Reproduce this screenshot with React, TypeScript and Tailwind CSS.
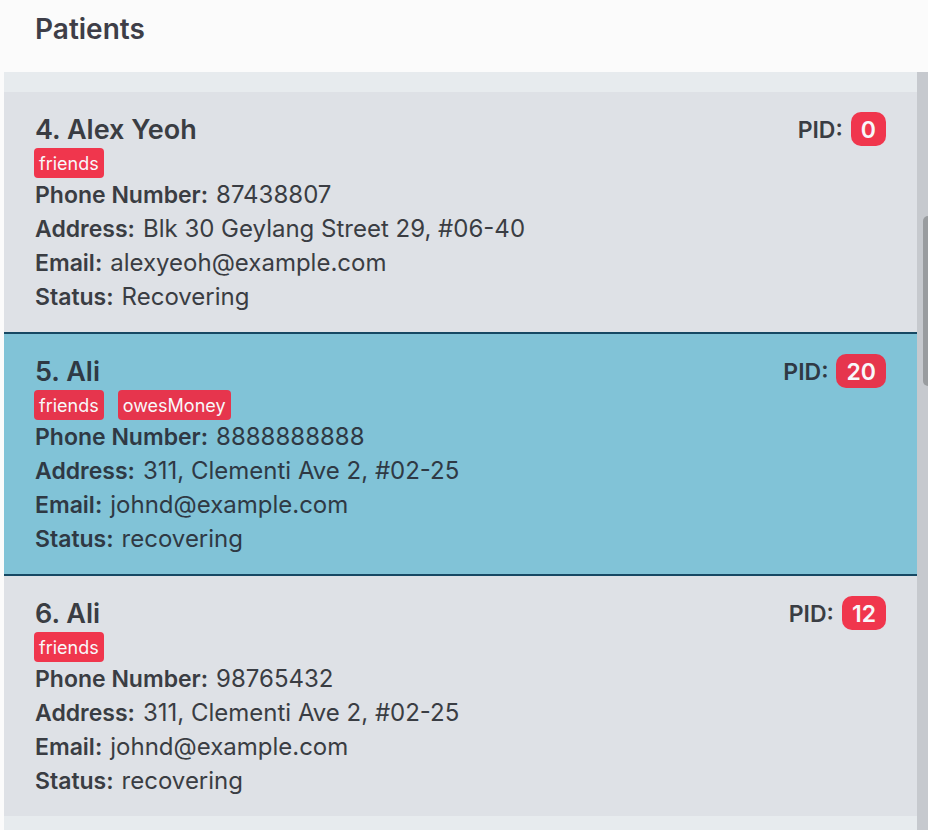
import React from "react";
import { clsx } from "clsx";

interface Patient {
  index: number;
  name: string;
  pid: number;
  tags: string[];
  phone: string;
  address: string;
  email: string;
  status: string;
  selected?: boolean;
}

const patients: Patient[] = [
  {
    index: 4,
    name: "Alex Yeoh",
    pid: 0,
    tags: ["friends"],
    phone: "87438807",
    address: "Blk 30 Geylang Street 29, #06-40",
    email: "alexyeoh@example.com",
    status: "Recovering",
  },
  {
    index: 5,
    name: "Ali",
    pid: 20,
    tags: ["friends", "owesMoney"],
    phone: "8888888888",
    address: "311, Clementi Ave 2, #02-25",
    email: "johnd@example.com",
    status: "recovering",
    selected: true,
  },
  {
    index: 6,
    name: "Ali",
    pid: 12,
    tags: ["friends"],
    phone: "98765432",
    address: "311, Clementi Ave 2, #02-25",
    email: "johnd@example.com",
    status: "recovering",
  },
];

function Field({ label, value }: { label: string; value: string }) {
  return (
    <div className="flex items-baseline gap-2 leading-[34px]">
      <dt className="text-[23px] leading-[34px] font-semibold">{label}:</dt>
      <dd className="text-[24px] leading-[34px]">{value}</dd>
    </div>
  );
}

function PatientCard({ patient }: { patient: Patient }) {
  const { selected } = patient;
  const red = selected ? "bg-[#e6354d]" : "bg-[#f0364d]";
  return (
    <li
      className={clsx(
        "px-[31px]",
        selected
          ? "border-y-2 border-[#164863] bg-[#81c3d7] text-[#2f3944]"
          : "bg-[#dee1e6] text-[#3a3d43]",
      )}
    >
      <div className="pt-5 pb-[18px]">
        <div className="flex h-9 items-start justify-between">
          <h2 className="text-[27px] leading-9 font-semibold">
            {patient.index}. {patient.name}
          </h2>
          <div className="flex items-center gap-2 text-[23px] leading-8 font-semibold">
            <span className="pt-0.5">PID:</span>
            <span
              className={clsx("rounded-[10px] px-2.5 pt-0.5 text-[#f8f8fa]", red)}
            >
              {patient.pid}
            </span>
          </div>
        </div>
        <ul className="-ml-px flex gap-3.5">
          {patient.tags.map((tag) => (
            <li
              key={tag}
              className={clsx(
                "rounded-[4px] px-[5px] pt-0.5 text-[18px] leading-7 text-[#f8f8fa]",
                red,
              )}
            >
              {tag}
            </li>
          ))}
        </ul>
        <dl>
          <Field label="Phone Number" value={patient.phone} />
          <Field label="Address" value={patient.address} />
          <Field label="Email" value={patient.email} />
          <Field label="Status" value={patient.status} />
        </dl>
      </div>
    </li>
  );
}

export default function App() {
  return (
    <main className="flex h-screen flex-col overflow-hidden bg-[#fbfbfb] pl-1 font-['Inter','Liberation_Sans',sans-serif]">
      <header className="px-[31px] pt-[11px] pb-[25px]">
        <h1 className="text-[28px] leading-9 font-semibold text-[#3e3e48]">
          Patients
        </h1>
      </header>
      <div className="flex min-h-0 flex-1 bg-[#e7ebee]">
        <ul className="min-w-0 flex-1 pt-5">
          {patients.map((patient) => (
            <PatientCard key={patient.index} patient={patient} />
          ))}
        </ul>
        <div className="w-[11px] bg-[#c6c9ce] pt-36 pl-1.5">
          <div className="h-[170px] rounded-l-[5px] bg-[#999c9f]" />
        </div>
      </div>
    </main>
  );
}
